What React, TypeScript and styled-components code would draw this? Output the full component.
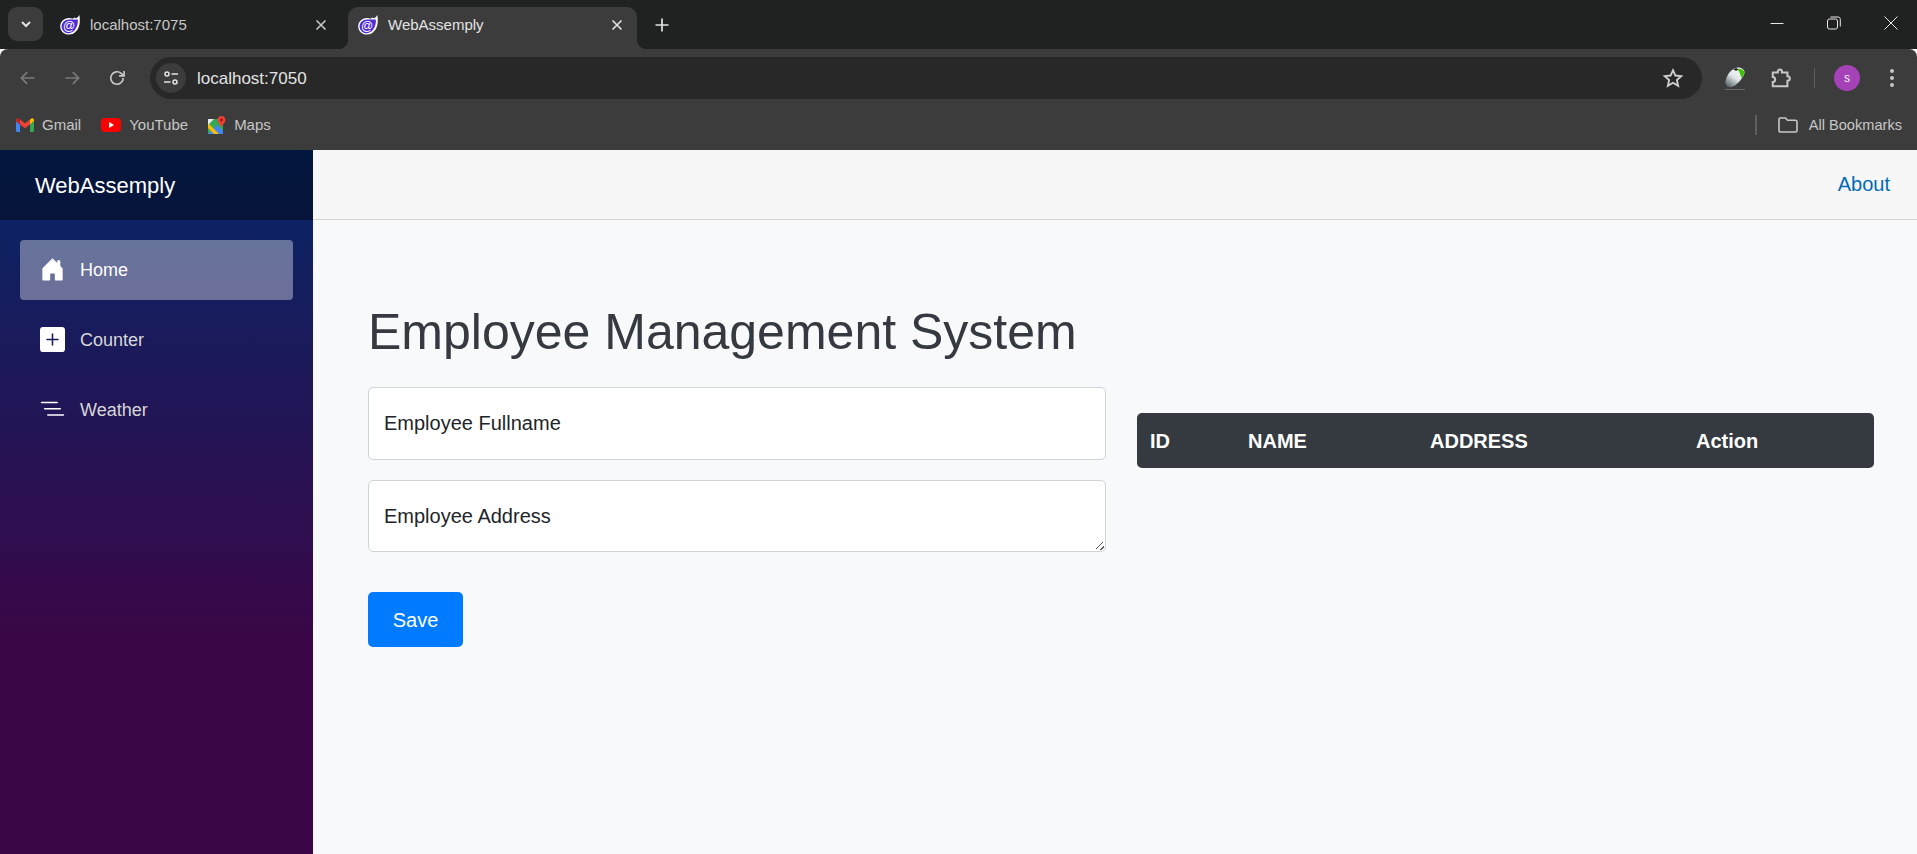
import React from "react"
import styled, { createGlobalStyle } from "styled-components"

const GlobalStyle = createGlobalStyle`
  html, body {
    margin: 0;
    height: 100%;
    overflow: hidden;
    background: #f8f9fa;
    font-family: "Liberation Sans", Arial, sans-serif;
  }
  * {
    box-sizing: border-box;
  }
  ::placeholder {
    color: #212529;
    opacity: 1;
  }
`

const Page = styled.div`
  width: 1917px;
  height: 854px;
  display: flex;
  flex-direction: column;
  overflow: hidden;
`

/* browser chrome */
const TabStrip = styled.div`
  height: 49px;
  flex: none;
  background: #202221;
  display: flex;
  align-items: flex-end;
  padding-left: 8px;
  color: #e3e3e3;
`

const TabSearch = styled.div`
  width: 35px;
  height: 34px;
  margin-bottom: 8px;
  margin-right: 6px;
  border-radius: 9px;
  background: #3c3c3c;
  display: flex;
  align-items: center;
  justify-content: center;
`

const Tab = styled.div<{ $active?: boolean }>`
  position: relative;
  width: ${(p) => (p.$active ? "289px" : "299px")};
  height: 42px;
  padding: 0 11px 7px ${(p) => (p.$active ? "10px" : "11px")};
  display: flex;
  align-items: center;
  font-size: 15px;
  border-radius: 10px 10px 0 0;
  background: ${(p) => (p.$active ? "#3c3c3c" : "transparent")};
  color: ${(p) => (p.$active ? "#e3e3e3" : "#c7c7c7")};

  ${(p) =>
    p.$active &&
    `
    &::before, &::after {
      content: "";
      position: absolute;
      bottom: 0;
      width: 10px;
      height: 10px;
    }
    &::before {
      left: -10px;
      background: radial-gradient(circle at 0 0, #202221 10px, #3c3c3c 10.5px);
    }
    &::after {
      right: -10px;
      background: radial-gradient(circle at 100% 0, #202221 10px, #3c3c3c 10.5px);
    }
  `}
`

const TabTitle = styled.span`
  flex: 1;
  margin-left: 10px;
`

const TabClose = styled.div<{ $active?: boolean }>`
  width: 14px;
  height: 14px;
  margin-right: ${(p) => (p.$active ? "2px" : "9px")};
  display: flex;
`

const NewTab = styled.div`
  width: 20px;
  height: 20px;
  margin: 0 0 14px 15px;
  display: flex;
`

const WindowControls = styled.div`
  margin-left: auto;
  height: 49px;
  padding: 0 1px 3px 0;
  display: flex;
  align-items: center;
  gap: 7px;
`

const WindowButton = styled.div`
  width: 50px;
  display: flex;
  justify-content: center;
`

const Toolbar = styled.div`
  height: 58px;
  flex: none;
  background: #3c3c3c;
  border-radius: 8px 8px 0 0;
  display: flex;
  align-items: center;
  color: #c7c7c7;
`

const NavButton = styled.div<{ $dim?: boolean }>`
  width: 44px;
  margin-left: ${(p) => (p.$dim ? "0" : "1px")};
  display: flex;
  justify-content: center;
  color: ${(p) => (p.$dim ? "#7a7a7a" : "#c7c7c7")};
`

const NavGroup = styled.div`
  width: 150px;
  padding-left: 6px;
  display: flex;
`

const AddressBar = styled.div`
  width: 1552px;
  height: 42px;
  border-radius: 21px;
  background: #282828;
  display: flex;
  align-items: center;
  padding: 0 18px 0 6px;
`

const SiteChip = styled.div`
  width: 30px;
  height: 30px;
  border-radius: 50%;
  background: #3c3c3c;
  display: flex;
  align-items: center;
  justify-content: center;
`

const AddressText = styled.span`
  flex: 1;
  margin-left: 11px;
  padding-top: 2px;
  font-size: 17px;
  color: #e3e3e3;
`

const ToolIcons = styled.div`
  flex: 1;
  display: flex;
  align-items: center;
  padding-left: 22px;
`

const ToolSpacer = styled.span`
  width: 24px;
`

const Divider = styled.div`
  width: 1px;
  height: 20px;
  background: #5e5e5e;
  margin: 0 19px 0 22px;
`

const Avatar = styled.div`
  width: 26px;
  height: 26px;
  border-radius: 50%;
  background: #a542b8;
  color: #f5f5f5;
  font-size: 12px;
  display: flex;
  align-items: center;
  justify-content: center;
`

const Kebab = styled.div`
  margin-left: 29px;
  display: flex;
`

const BookmarkBar = styled.div`
  height: 43px;
  flex: none;
  background: #3c3c3c;
  display: flex;
  align-items: center;
  padding: 0 15px 8px 16px;
  font-size: 15px;
  color: #c7c7c7;
`

const Bookmark = styled.div`
  display: flex;
  align-items: center;
  gap: 8px;
  margin-right: 20px;
`

const AllBookmarks = styled.div`
  margin-left: auto;
  display: flex;
  align-items: center;
  gap: 11px;
  font-size: 14.6px;
`

const BookmarkDivider = styled.div`
  width: 2px;
  height: 20px;
  background: #5e5e5e;
  margin-right: 10px;
`

/* page */
const Shell = styled.div`
  flex: 1;
  display: flex;
  min-height: 0;
`

const Sidebar = styled.aside`
  width: 313px;
  flex: none;
  background-image: linear-gradient(180deg, rgb(5, 39, 103) 0%, #3a0647 70%);
`

const Brand = styled.div`
  height: 70px;
  background: rgba(0, 0, 0, 0.4);
  display: flex;
  align-items: center;
  padding: 2px 0 0 35px;
  font-size: 22px;
  color: #fff;
`

const NavList = styled.nav`
  padding: 20px 20px 0;
  display: flex;
  flex-direction: column;
  gap: 10px;
`

const NavItem = styled.a<{ $active?: boolean }>`
  height: 60px;
  border-radius: 4px;
  display: flex;
  align-items: center;
  padding-left: 20px;
  font-size: 18px;
  color: ${(p) => (p.$active ? "#fff" : "#d7d7d7")};
  background: ${(p) => (p.$active ? "rgba(255, 255, 255, 0.37)" : "transparent")};
`

const NavIcon = styled.span`
  width: 25px;
  height: 25px;
  margin: 0 15px 2px 0;
  display: flex;
`

const Main = styled.main`
  flex: 1;
  min-width: 0;
`

const TopRow = styled.div`
  height: 70px;
  background: #f7f7f7;
  border-bottom: 1px solid #d6d5d5;
  display: flex;
  align-items: center;
  justify-content: flex-end;
  padding-right: 27px;
`

const AboutLink = styled.a`
  font-size: 20px;
  color: #006bb7;
`

const Content = styled.div`
  padding: 80px 43px 0 55px;
`

const Title = styled.h1`
  margin: 0 0 23px;
  font-size: 50px;
  line-height: 64px;
  font-weight: 400;
  color: #343a40;
`

const Columns = styled.div`
  display: grid;
  grid-template-columns: 738px 737px;
  column-gap: 31px;
`

const Form = styled.form`
  display: flex;
  flex-direction: column;
`

const FullnameInput = styled.input`
  height: 73px;
  margin-bottom: 20px;
  padding: 0 15px;
  border: 1px solid #ced4da;
  border-radius: 5px;
  background: #fff;
  font: 20px "Liberation Sans", Arial, sans-serif;
  outline: none;
`

const AddressInput = styled.textarea`
  height: 72px;
  margin-bottom: 40px;
  padding: 23px 15px 0;
  border: 1px solid #ced4da;
  border-radius: 5px;
  background: #fff;
  font: 20px/24px "Liberation Sans", Arial, sans-serif;
  outline: none;

  &::-webkit-resizer {
    background: linear-gradient(
        135deg,
        transparent 38%,
        #555 38%,
        #555 50%,
        transparent 50%,
        transparent 70%,
        #555 70%,
        #555 82%,
        transparent 82%
      )
      no-repeat right 1px bottom 1px / 8px 8px;
  }
`

const SaveButton = styled.button`
  width: 95px;
  height: 55px;
  padding: 1px 0 0;
  border: none;
  border-radius: 5px;
  background: #007bff;
  color: #fff;
  font: 20px "Liberation Sans", Arial, sans-serif;
`

const TableWrap = styled.div`
  padding-top: 26px;
`

const EmployeeTable = styled.table`
  width: 737px;
  height: 55px;
  border-collapse: separate;
  border-spacing: 0;
  table-layout: fixed;
  background: #343a40;
  border-radius: 5px;
  color: #fff;
  font-size: 20px;
`

const HeadCell = styled.th<{ $width: number }>`
  width: ${(p) => p.$width}px;
  padding: 2px 0 0 13px;
  text-align: left;
  font-weight: 700;
`

const Glyph = ({ size = 16, children }: { size?: number; children: React.ReactNode }) => (
  <svg width={size} height={size} viewBox="0 0 24 24" fill="none" stroke="currentColor" strokeWidth="2">
    {children}
  </svg>
)

const BlazorIcon = () => (
  <svg width="20" height="20" viewBox="0 0 20 20" style={{ flex: "none" }}>
    <path d="M19.4 0 C19.8 3 20 5.5 19.6 8.5 C19 14 15 19.6 9 19.6 C4 19.6 .2 16 .2 11.4 C.2 6.6 4 3 9 3 C10.5 3 11.6 3.2 12.6 3.7 C13.4 2.6 14.2 3 15 2.4 C15.2 3.2 15.6 3.4 16 3.2 C17.4 2.8 18.6 1.6 19.4 0 Z" fill="#fff" />
    <path d="M17.8 4.5 C18.4 9 16 17.6 9 18.2 C5 18.4 1.6 15.4 1.6 11.4 C1.6 7.4 4.8 4.4 9 4.4 C12 4.4 15 4.8 17.8 4.5 Z" fill="#512bd4" />
    <text x="9" y="15" fontSize="12" textAnchor="middle" fill="#fff" fontFamily="Liberation Sans, Arial, sans-serif">@</text>
  </svg>
)

const CloseIcon = () => (
  <svg width="14" height="14" viewBox="0 0 14 14" stroke="currentColor" strokeWidth="1.6">
    <path d="M2.5 2.5 L11.5 11.5 M11.5 2.5 L2.5 11.5" />
  </svg>
)

const App: React.FC = () => {
  return (
    <>
      <GlobalStyle />
      <Page>
        <TabStrip>
          <TabSearch>
            <svg width="12" height="12" viewBox="0 0 12 12" fill="none" stroke="#e3e3e3" strokeWidth="2">
              <path d="M2 4 L6 8 L10 4" />
            </svg>
          </TabSearch>
          <Tab>
            <BlazorIcon />
            <TabTitle>localhost:7075</TabTitle>
            <TabClose>
              <CloseIcon />
            </TabClose>
          </Tab>
          <Tab $active>
            <BlazorIcon />
            <TabTitle>WebAssemply</TabTitle>
            <TabClose $active>
              <CloseIcon />
            </TabClose>
          </Tab>
          <NewTab>
            <svg width="20" height="20" viewBox="0 0 20 20" stroke="#e3e3e3" strokeWidth="1.7">
              <path d="M10 3.5 V16.5 M3.5 10 H16.5" />
            </svg>
          </NewTab>
          <WindowControls>
            <WindowButton>
              <svg width="14" height="14" viewBox="0 0 14 14" stroke="#e8e8e8">
                <path d="M0.5 7.5 H13.5" />
              </svg>
            </WindowButton>
            <WindowButton>
              <svg width="14" height="14" viewBox="0 0 14 14" fill="none" stroke="#e8e8e8">
                <rect x="0.5" y="3" width="10" height="10" rx="2" />
                <path d="M3.5 1 H11 C12.4 1 13.3 2 13.3 3.3 V10.5" />
              </svg>
            </WindowButton>
            <WindowButton>
              <svg width="14" height="14" viewBox="0 0 14 14" stroke="#e8e8e8">
                <path d="M0.5 0.5 L13.5 13.5 M13.5 0.5 L0.5 13.5" />
              </svg>
            </WindowButton>
          </WindowControls>
        </TabStrip>

        <Toolbar>
          <NavGroup>
            <NavButton $dim>
              <Glyph size={20}>
                <path d="M20 12 H5 M11 5 L4 12 L11 19" />
              </Glyph>
            </NavButton>
            <NavButton $dim>
              <Glyph size={20}>
                <path d="M4 12 H19 M13 5 L20 12 L13 19" />
              </Glyph>
            </NavButton>
            <NavButton>
              <Glyph size={20}>
                <path d="M19.5 12 A7.5 7.5 0 1 1 17 6.4 L20 9" />
                <path d="M20.5 3.5 V9.5 H14.5" />
              </Glyph>
            </NavButton>
          </NavGroup>
          <AddressBar>
            <SiteChip>
              <svg width="18" height="18" viewBox="0 0 18 18" fill="none" stroke="#e3e3e3" strokeWidth="1.5">
                <circle cx="5" cy="5" r="2" />
                <path d="M9.5 5 H16 M2 13 H8.5" />
                <circle cx="13" cy="13" r="2" />
              </svg>
            </SiteChip>
            <AddressText>localhost:7050</AddressText>
            <svg width="22" height="22" viewBox="0 0 24 24" fill="none" stroke="#d0d0d0" strokeWidth="2">
              <path d="M12 3.5 L14.6 9.3 L21 10 L16.2 14.2 L17.6 20.5 L12 17.2 L6.4 20.5 L7.8 14.2 L3 10 L9.4 9.3 Z" />
            </svg>
          </AddressBar>
          <ToolIcons>
            <svg width="22" height="24" viewBox="0 0 22 24">
              <defs>
                <linearGradient id="mouseBody" x1="0.8" y1="0" x2="0.1" y2="1">
                  <stop offset="0" stopColor="#ffffff" />
                  <stop offset="0.5" stopColor="#dfe4e6" />
                  <stop offset="1" stopColor="#4c5a60" />
                </linearGradient>
              </defs>
              <path d="M1.5 15 C0.5 20 5 22.5 9 20.5 C14 18 19 12 20.5 7 C21 4 18 1.5 14 1.5 C8 2 3 8 1.5 15 Z" fill="url(#mouseBody)" />
              <path d="M13.5 3 C16 2.2 20 3.5 20.5 6.5 C20 9 18.5 11 17.5 12 C16.5 8.5 15 5 13.5 3 Z" fill="#3fc20a" />
              <path d="M9.5 3.5 C11 2 13.5 2 14 3.2 C14 4.5 11.5 5.5 9.5 3.5 Z" fill="#1c1c1c" />
              <path d="M1 23.5 H21" stroke="#6a6a6a" strokeWidth="1" />
            </svg>
            <ToolSpacer />
            <svg width="22" height="22" viewBox="0 0 24 24" fill="none" stroke="#c7c7c7" strokeWidth="2.2">
              <path d="M3 6 H8.5 V5 C8.5 2 13 2 13 5 V6 H19 V10 C22.5 10 22.5 15 19 15 V21 H3 V16.5 C6.5 16.5 6.5 11 3 11 Z" />
            </svg>
            <Divider />
            <Avatar>s</Avatar>
            <Kebab>
              <svg width="6" height="20" viewBox="0 0 6 20" fill="#c7c7c7">
                <circle cx="3" cy="3" r="2" />
                <circle cx="3" cy="10" r="2" />
                <circle cx="3" cy="17" r="2" />
              </svg>
            </Kebab>
          </ToolIcons>
        </Toolbar>

        <BookmarkBar>
          <Bookmark>
            <svg width="18" height="14" viewBox="0 0 18 14">
              <path d="M0 3 V12.5 C0 13.3 .6 14 1.4 14 H4 V6.5 Z" fill="#4285f4" />
              <path d="M18 3 V12.5 C18 13.3 17.4 14 16.6 14 H14 V6.5 Z" fill="#34a853" />
              <path d="M4 6.5 L9 10.2 L14 6.5 V1.5 L9 5.2 L4 1.5 Z" fill="#ea4335" />
              <path d="M0 3 L4 6.5 V1.5 L2.6 .5 C1.4 -.4 0 .6 0 2 Z" fill="#c5221f" />
              <path d="M18 3 L14 6.5 V1.5 L15.4 .5 C16.6 -.4 18 .6 18 2 Z" fill="#fbbc04" />
            </svg>
            Gmail
          </Bookmark>
          <Bookmark>
            <svg width="20" height="14" viewBox="0 0 20 14">
              <rect width="20" height="14" rx="4" fill="#f00" />
              <path d="M8 4 L13 7 L8 10 Z" fill="#fff" />
            </svg>
            YouTube
          </Bookmark>
          <Bookmark>
            <svg width="18" height="18" viewBox="0 0 18 18">
              <rect y="3" width="15" height="15" rx="1.5" fill="#34a853" />
              <path d="M0 18 L9 9 L15 15 V18 Z" fill="#4285f4" />
              <path d="M0 7 L11 18 H6 L0 12 Z" fill="#fbbc04" />
              <path d="M0 3 H6 L0 9 Z" fill="#e8eaed" />
              <path d="M13.5 0 C15.8 0 17.5 1.7 17.5 4 C17.5 6.4 15 8 13.5 11 C12 8 9.5 6.4 9.5 4 C9.5 1.7 11.2 0 13.5 0 Z" fill="#ea4335" />
              <circle cx="13.5" cy="4" r="1.4" fill="#a50e0e" />
            </svg>
            Maps
          </Bookmark>
          <AllBookmarks>
            <BookmarkDivider />
            <svg width="20" height="16" viewBox="0 0 20 16" fill="none" stroke="#c7c7c7" strokeWidth="1.6">
              <path d="M1 2.5 C1 1.6 1.6 1 2.5 1 H7.5 L9.5 3.2 H17.5 C18.4 3.2 19 3.8 19 4.7 V13.5 C19 14.4 18.4 15 17.5 15 H2.5 C1.6 15 1 14.4 1 13.5 Z" />
            </svg>
            All Bookmarks
          </AllBookmarks>
        </BookmarkBar>

        <Shell>
          <Sidebar>
            <Brand>WebAssemply</Brand>
            <NavList>
              <NavItem $active>
                <NavIcon>
                  <svg width="25" height="25" viewBox="0 0 16 16" fill="#fff">
                    <path d="M6.5 14.5v-3.505c0-.245.25-.495.5-.495h2c.25 0 .5.25.5.5v3.5a.5.5 0 0 0 .5.5h4a.5.5 0 0 0 .5-.5v-7a.5.5 0 0 0-.146-.354L13 5.793V2.5a.5.5 0 0 0-.5-.5h-1a.5.5 0 0 0-.5.5v1.293L8.354 1.146a.5.5 0 0 0-.708 0l-6 6A.5.5 0 0 0 1.5 7.5v7a.5.5 0 0 0 .5.5h4a.5.5 0 0 0 .5-.5Z" />
                  </svg>
                </NavIcon>
                Home
              </NavItem>
              <NavItem>
                <NavIcon>
                  <svg width="25" height="25" viewBox="0 0 16 16" fill="#fff">
                    <path d="M2 0a2 2 0 0 0-2 2v12a2 2 0 0 0 2 2h12a2 2 0 0 0 2-2V2a2 2 0 0 0-2-2H2zm6.5 4.5v3h3a.5.5 0 0 1 0 1h-3v3a.5.5 0 0 1-1 0v-3h-3a.5.5 0 0 1 0-1h3v-3a.5.5 0 0 1 1 0z" />
                  </svg>
                </NavIcon>
                Counter
              </NavItem>
              <NavItem>
                <NavIcon>
                  <svg width="25" height="25" viewBox="0 0 16 16" fill="#fff">
                    <path d="M4.5 11.5A.5.5 0 0 1 5 11h10a.5.5 0 0 1 0 1H5a.5.5 0 0 1-.5-.5zm-2-4A.5.5 0 0 1 3 7h10a.5.5 0 0 1 0 1H3a.5.5 0 0 1-.5-.5zm-2-4A.5.5 0 0 1 1 3h10a.5.5 0 0 1 0 1H1a.5.5 0 0 1-.5-.5z" />
                  </svg>
                </NavIcon>
                Weather
              </NavItem>
            </NavList>
          </Sidebar>
          <Main>
            <TopRow>
              <AboutLink>About</AboutLink>
            </TopRow>
            <Content>
              <Title>Employee Management System</Title>
              <Columns>
                <Form>
                  <FullnameInput placeholder="Employee Fullname" />
                  <AddressInput placeholder="Employee Address" />
                  <div>
                    <SaveButton type="button">Save</SaveButton>
                  </div>
                </Form>
                <TableWrap>
                  <EmployeeTable>
                    <thead>
                      <tr>
                        <HeadCell $width={98}>ID</HeadCell>
                        <HeadCell $width={182}>NAME</HeadCell>
                        <HeadCell $width={266}>ADDRESS</HeadCell>
                        <HeadCell $width={191}>Action</HeadCell>
                      </tr>
                    </thead>
                  </EmployeeTable>
                </TableWrap>
              </Columns>
            </Content>
          </Main>
        </Shell>
      </Page>
    </>
  )
}

export default App
